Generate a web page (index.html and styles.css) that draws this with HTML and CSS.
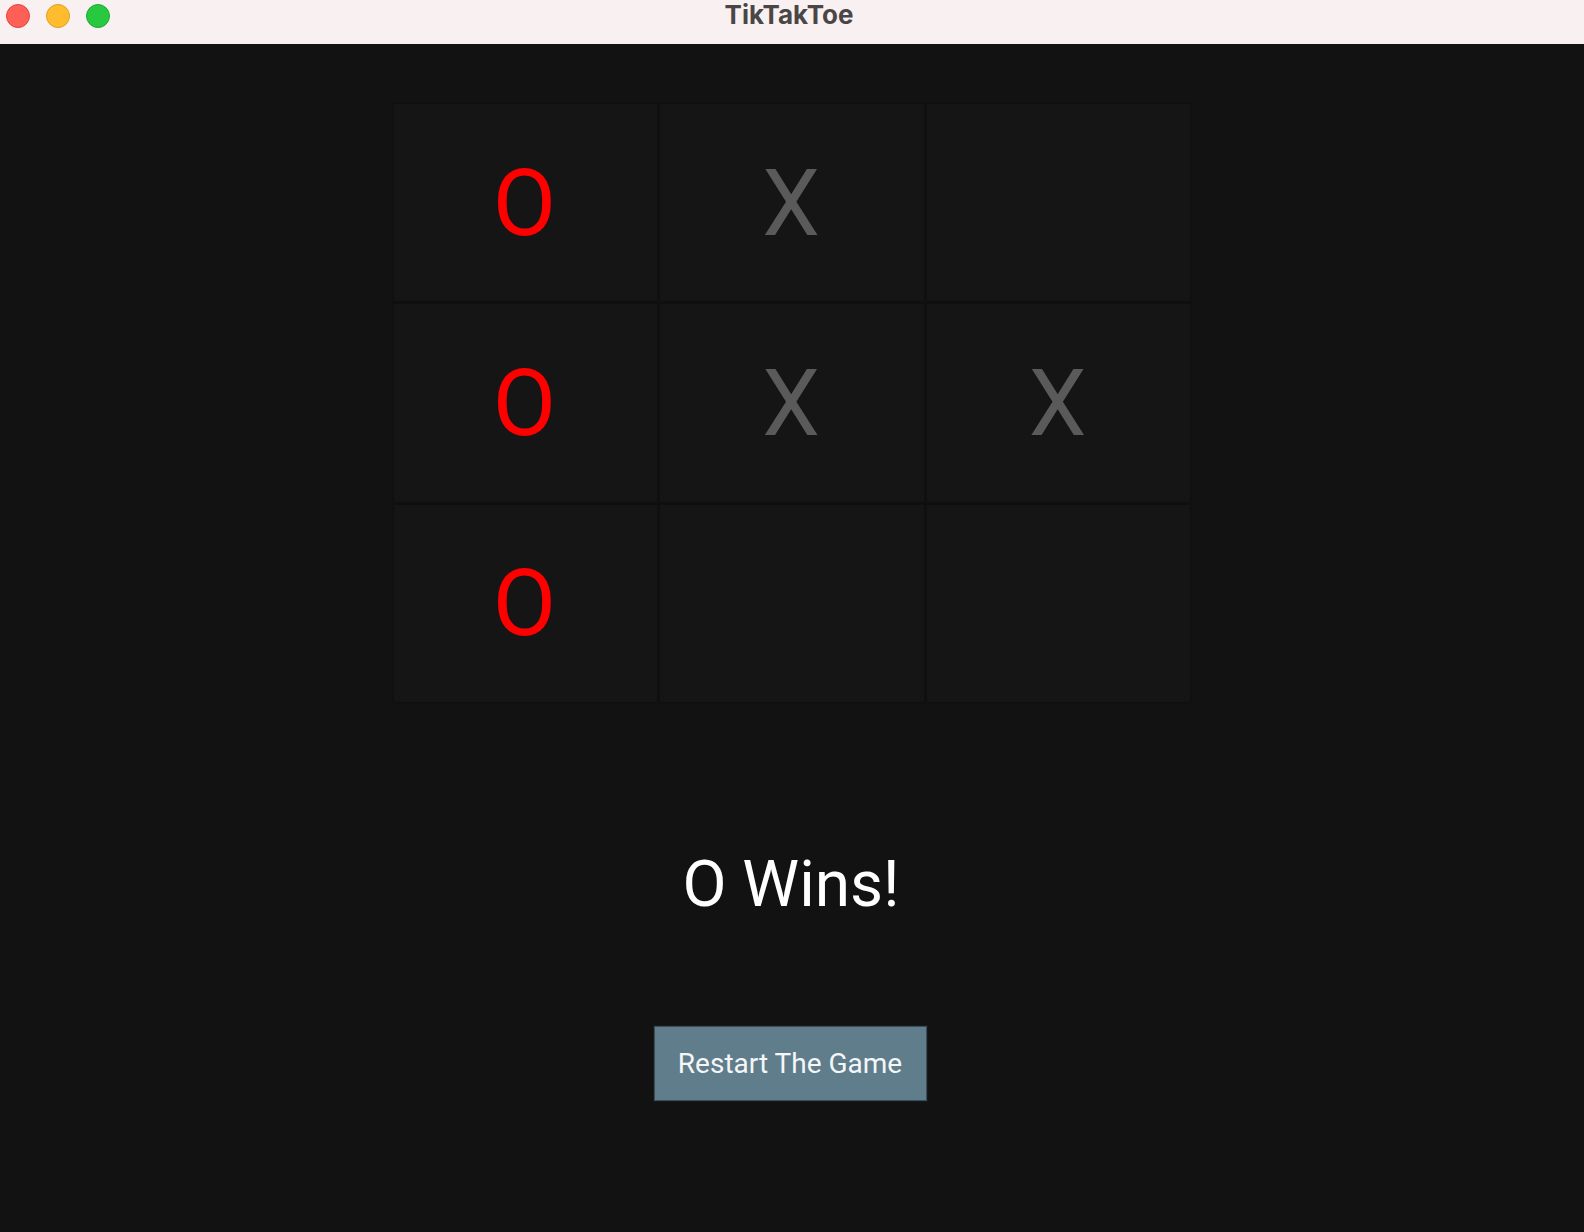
FILE: index.html
```html
<!DOCTYPE html>
<html>
<head>
<meta charset="utf-8">
<title>TikTakToe</title>
<link rel="stylesheet" href="styles.css">
</head>
<body>
<div class="titlebar">
  <div class="lights">
    <span class="light red"></span>
    <span class="light yellow"></span>
    <span class="light green"></span>
  </div>
  <div class="title">TikTakToe</div>
</div>
<main class="app">
  <div class="board">
    <div class="cell o">O</div>
    <div class="cell x">X</div>
    <div class="cell"></div>
    <div class="cell o">O</div>
    <div class="cell x">X</div>
    <div class="cell x">X</div>
    <div class="cell o">O</div>
    <div class="cell"></div>
    <div class="cell"></div>
  </div>
  <div class="status">O Wins!</div>
  <button class="restart">Restart The Game</button>
</main>
</body>
</html>
```

FILE: styles.css
```css
html, body {
  margin: 0;
  padding: 0;
  background: #121212;
  height: 100%;
}
body {
  font-family: Roboto, "Liberation Sans", sans-serif;
  display: flex;
  flex-direction: column;
}
.titlebar {
  position: relative;
  height: 44px;
  background: #f8f0f1;
  flex: none;
}
.lights {
  display: flex;
  gap: 16px;
  padding: 4px 0 0 6px;
}
.light {
  width: 22px;
  height: 22px;
  border-radius: 50%;
  border: 1px solid rgba(0,0,0,0.12);
}
.red { background: #fe5f57; border-color: #e1463f; }
.yellow { background: #febc2e; border-color: #dfa023; }
.green { background: #28c840; border-color: #1eab2f; }
.title {
  position: absolute;
  left: 0;
  right: 0;
  top: 0;
  height: 30px;
  line-height: 30px;
  text-align: center;
  font-family: Inter, "Open Sans", sans-serif;
  font-weight: 700;
  font-size: 26px;
  color: #4b4646;
  padding-right: 6px;
}
.app {
  flex: 1;
  display: flex;
  flex-direction: column;
  align-items: center;
  padding-top: 60px;
}
.board {
  width: 797px;
  height: 598px;
  display: grid;
  grid-template-columns: repeat(3, 1fr);
  grid-template-rows: repeat(3, 1fr);
  gap: 3px;
}
.cell {
  background: #151515;
  box-shadow: 0 0 1px 1px rgba(0,0,0,0.15);
  display: flex;
  align-items: center;
  justify-content: center;
  font-size: 92px;
  line-height: 1;
  padding-top: 2px;
  padding-right: 2px;
}
.cell.o { color: #ff0000; }
.cell.x { color: #5a5a5a; }
.status {
  margin-top: 152px;
  height: 62px;
  line-height: 62px;
  font-size: 64px;
  color: #ffffff;
  padding-right: 2px;
}
.restart {
  margin-top: 111px;
  width: 271px;
  height: 73px;
  background: #607d8b;
  border: none;
  box-shadow: 0 0 1px 1px #3c4c55;
  color: #f4f6f7;
  font-family: Roboto, "Liberation Sans", sans-serif;
  font-size: 28px;
  padding: 0;
  margin-left: -4px;
}
```
